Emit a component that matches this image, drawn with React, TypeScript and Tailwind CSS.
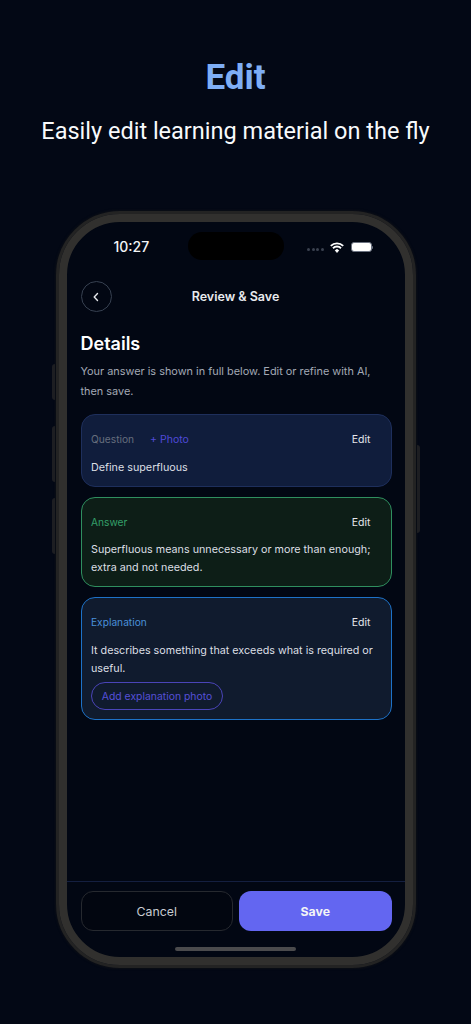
import React from "react";

function Card({ border, bg, children }: { border: string; bg: string; children: React.ReactNode }) {
  return <div className={`rounded-[14px] border pl-[9.5px] pr-[9px] pt-[13px] ${border} ${bg}`}>{children}</div>;
}

function Edit() {
  return <span className="mr-[11px] text-[10.5px] leading-[24px] text-[#e5e7eb]">Edit</span>;
}

export default function App() {
  return (
    <div className="flex h-[1024px] w-[471px] flex-col items-center overflow-hidden bg-[#030815] font-['Inter',sans-serif]">
      <h1 className="mt-[59px] font-['Roboto',sans-serif] text-[35px] font-bold leading-[38px] text-[#7eaef5]">Edit</h1>
      <p className="mt-[20px] font-['Roboto',sans-serif] text-[23.5px] leading-[28px] text-[#f8fafc]">Easily edit learning material on the fly</p>

      <div className="relative mt-[66px] h-[757px] w-[360px] rounded-[64px] border-[3px] border-[#232323] shadow-[0_0_3px_#161616]">
        <div className="absolute -left-[7px] top-[150px] h-[36px] w-[3px] rounded-l bg-[#1d1e22]" />
        <div className="absolute -left-[7px] top-[212px] h-[56px] w-[3px] rounded-l bg-[#1d1e22]" />
        <div className="absolute -left-[7px] top-[284px] h-[56px] w-[3px] rounded-l bg-[#1d1e22]" />
        <div className="absolute -right-[7px] top-[231px] h-[88px] w-[3px] rounded-r bg-[#1d1e22]" />

        <div className="flex h-full flex-col rounded-[61px] border-[8px] border-[#31302e] bg-[#020713]">
          <div className="relative flex h-[50px] shrink-0 items-center justify-between pl-[47px] pr-[32px]">
            <span className="text-[14px] font-medium leading-[20px] text-[#f3f4f6]">10:27</span>
            <div className="absolute left-[121px] top-[10px] h-[28px] w-[96px] rounded-full bg-black" />
            <div className="flex items-center gap-[6px]">
              <div className="mt-[5px] flex gap-[1.5px]">
                <i className="h-[3px] w-[3px] rounded-full bg-[#3b4250]" />
                <i className="h-[3px] w-[3px] rounded-full bg-[#3b4250]" />
                <i className="h-[3px] w-[3px] rounded-full bg-[#3b4250]" />
                <i className="h-[3px] w-[3px] rounded-full bg-[#3b4250]" />
              </div>
              <svg width="14" height="11" viewBox="0 0 14 11" fill="none" stroke="#fff" strokeWidth="1.9">
                <path d="M.8 3.9a8.9 8.9 0 0 1 12.4 0" />
                <path d="M3 6.2a5.7 5.7 0 0 1 8 0" />
                <path d="M5.3 8.4a2.4 2.4 0 0 1 3.4 0L7 10.4Z" fill="#fff" strokeWidth="1" />
              </svg>
              <div className="ml-px flex items-center">
                <div className="h-[10px] w-[21px] rounded-[3px] border border-[#6b7280] bg-white" />
                <div className="h-[3px] w-[1px] rounded-r bg-[#6b7280]" />
              </div>
            </div>
          </div>

          <div className="relative mt-[9px] flex h-[31px] shrink-0 items-center justify-center">
            <button className="absolute left-[14px] flex h-[31px] w-[31px] items-center justify-center rounded-full border border-[#374151]">
              <svg width="12" height="12" viewBox="0 0 12 12" fill="none" stroke="#e5e7eb" strokeWidth="1.4" strokeLinecap="round" strokeLinejoin="round">
                <path d="M7.5 2.5 4.2 6l3.3 3.5" />
              </svg>
            </button>
            <span className="pt-[1px] text-[12.5px] font-semibold leading-[20px] text-[#e8eaee]">Review &amp; Save</span>
          </div>

          <div className="flex flex-1 flex-col pl-[14px] pr-[13px]">
            <h2 className="mt-[20px] text-[18px] font-semibold leading-[24px] text-white">Details</h2>
            <p className="mt-[5px] text-[10.9px] leading-[20px] text-[#a3a9b5]">
              Your answer is shown in full below. Edit or refine with AI, then save.
            </p>
            <div className="mt-[13px] flex flex-col gap-[10px]">
              <Card border="border-[#1e2f5c]" bg="bg-[#101d3c]">
                <div className="flex h-[24px] justify-between">
                  <div className="flex gap-[16px] leading-[23px]">
                    <span className="text-[10.2px] text-[#666d7c]">Question</span>
                    <span className="text-[10.5px] text-[#4f4ad8]">+ Photo</span>
                  </div>
                  <Edit />
                </div>
                <p className="mb-[9px] mt-[7px] text-[10.75px] leading-[18px] text-[#dcdfe4]">Define superfluous</p>
              </Card>
              <Card border="border-[#2f8f5f]" bg="bg-[#0d1e17]">
                <div className="flex h-[24px] justify-between">
                  <span className="text-[10.2px] leading-[23px] text-[#34a06a]">Answer</span>
                  <Edit />
                </div>
                <p className="mb-[9px] mt-[6px] text-[10.75px] leading-[18px] text-[#dcdfe4]">
                  Superfluous means unnecessary or more than enough; extra and not needed.
                </p>
              </Card>
              <Card border="border-[#1d72c8]" bg="bg-[#101b2e]">
                <div className="flex h-[24px] justify-between">
                  <span className="text-[10.2px] leading-[23px] text-[#4a90d9]">Explanation</span>
                  <Edit />
                </div>
                <p className="mt-[7px] text-[10.75px] leading-[18px] text-[#dcdfe4]">
                  It describes something that exceeds what is required or useful.
                </p>
                <div className="mb-[9px] mt-[4px] flex h-[28px] w-[132px] items-center justify-center rounded-full border border-[#4a44b8] pt-[1px] text-[10.4px] text-[#5650d8]">
                  Add explanation photo
                </div>
              </Card>
            </div>
          </div>

          <div className="h-[76px] shrink-0 border-t border-[#141f40]">
            <div className="flex gap-[6px] pl-[14px] pr-[13px] pt-[9px]">
              <button className="h-[40px] w-[153px] rounded-[12px] border border-[#26292f] bg-[#020610] pt-[2px] text-[12.3px] text-[#c8ccd2]">Cancel</button>
              <button className="h-[40px] w-[153px] rounded-[12px] bg-[#6366f1] pt-[2px] text-[12.3px] font-bold text-[#f3f4f6]">Save</button>
            </div>
            <div className="mx-auto mt-[16px] h-[4px] w-[121px] rounded-full bg-[#4b4b4d]" />
          </div>
        </div>
      </div>
    </div>
  );
}
